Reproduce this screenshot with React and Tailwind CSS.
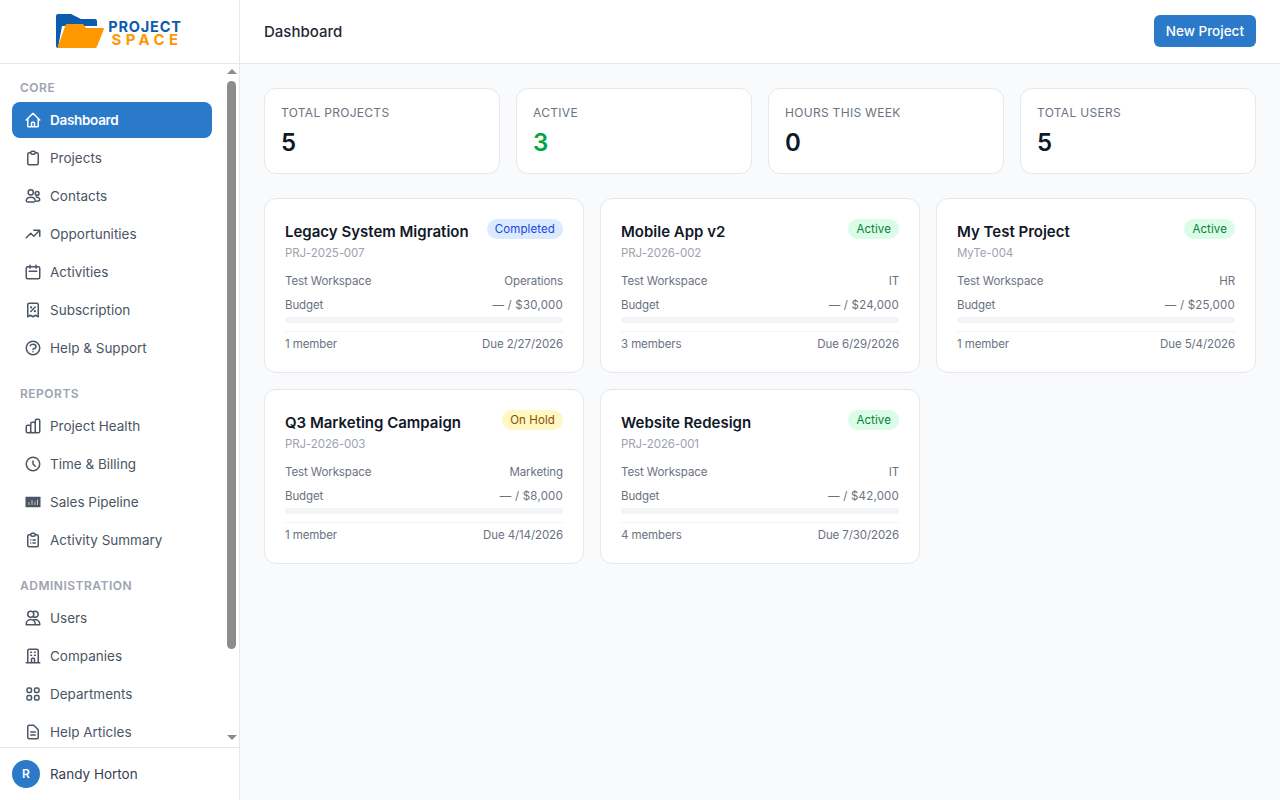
import React from 'react';
import {
  HiOutlineHome,
  HiOutlineClipboard,
  HiOutlineUsers,
  HiOutlineTrendingUp,
  HiOutlineCalendar,
  HiOutlineReceiptTax,
  HiOutlineQuestionMarkCircle,
  HiOutlineChartBar,
  HiOutlineClock,
  HiOutlineClipboardList,
  HiOutlineOfficeBuilding,
  HiOutlineViewGrid,
  HiOutlineDocumentText,
} from 'react-icons/hi';

const ContactsIcon = ({ className }) => (
  <svg className={className} viewBox="0 0 24 24" fill="none" stroke="currentColor" strokeWidth="2">
    <circle cx="9" cy="7" r="3.500" />
    <circle cx="17.500" cy="8.500" r="2.500" />
    <path d="M3 18.500c0-3 2.700-5 6-5s6 2 6 5c0 1-1 1.500-6 1.500s-6-.5-6-1.500Z" />
    <path d="M15.500 13.500c3-.5 5.500 1 5.500 3.500 0 1.500-1.500 2-5 2" />
  </svg>
);

const PipelineIcon = ({ className }) => (
  <svg className={className} viewBox="0 0 18 18">
    <rect x="1.500" y="3.700" width="15" height="10.500" rx="0.500" fill="#4b5563" />
    <path d="M5 12V9M8 12V7M11 12V8.500M13.500 12V6.500" stroke="#c3c8d0" strokeWidth="1" />
  </svg>
);

const sections = [
  {
    title: 'CORE',
    items: [
      { label: 'Dashboard', icon: HiOutlineHome, active: true },
      { label: 'Projects', icon: HiOutlineClipboard },
      { label: 'Contacts', icon: ContactsIcon },
      { label: 'Opportunities', icon: HiOutlineTrendingUp },
      { label: 'Activities', icon: HiOutlineCalendar },
      { label: 'Subscription', icon: HiOutlineReceiptTax },
      { label: 'Help & Support', icon: HiOutlineQuestionMarkCircle },
    ],
  },
  {
    title: 'REPORTS',
    items: [
      { label: 'Project Health', icon: HiOutlineChartBar },
      { label: 'Time & Billing', icon: HiOutlineClock },
      { label: 'Sales Pipeline', icon: PipelineIcon },
      { label: 'Activity Summary', icon: HiOutlineClipboardList },
    ],
  },
  {
    title: 'ADMINISTRATION',
    items: [
      { label: 'Users', icon: HiOutlineUsers },
      { label: 'Companies', icon: HiOutlineOfficeBuilding },
      { label: 'Departments', icon: HiOutlineViewGrid },
      { label: 'Help Articles', icon: HiOutlineDocumentText },
    ],
  },
];

const stats = [
  { label: 'TOTAL PROJECTS', value: '5', color: 'text-gray-900' },
  { label: 'ACTIVE', value: '3', color: 'text-green-600' },
  { label: 'HOURS THIS WEEK', value: '0', color: 'text-gray-900' },
  { label: 'TOTAL USERS', value: '5', color: 'text-gray-900' },
];

const badgeStyles = {
  Completed: 'bg-blue-100 text-blue-700',
  Active: 'bg-green-100 text-green-700',
  'On Hold': 'bg-yellow-100 text-yellow-800',
};

const projects = [
  { name: 'Legacy System Migration', code: 'PRJ-2025-007', status: 'Completed', dept: 'Operations', budget: '— / $30,000', members: '1 member', due: 'Due 2/27/2026' },
  { name: 'Mobile App v2', code: 'PRJ-2026-002', status: 'Active', dept: 'IT', budget: '— / $24,000', members: '3 members', due: 'Due 6/29/2026' },
  { name: 'My Test Project', code: 'MyTe-004', status: 'Active', dept: 'HR', budget: '— / $25,000', members: '1 member', due: 'Due 5/4/2026' },
  { name: 'Q3 Marketing Campaign', code: 'PRJ-2026-003', status: 'On Hold', dept: 'Marketing', budget: '— / $8,000', members: '1 member', due: 'Due 4/14/2026' },
  { name: 'Website Redesign', code: 'PRJ-2026-001', status: 'Active', dept: 'IT', budget: '— / $42,000', members: '4 members', due: 'Due 7/30/2026' },
];

const Logo = () => (
  <div className="flex items-center">
    <svg className="mb-[2px]" width="48" height="34" viewBox="0 0 48 34">
      <path d="M0 2Q0 0 2 0H15L25 5H39Q41 5 41 7V12H6L2 34H2Q0 34 0 32Z" fill="#0b5cad" />
      <path d="M9.500 11Q10 10 11 10H27L30 14H47Q48.300 14 48 15L41 32.500Q40.300 34 39 34H3Q1.500 34 2 32.500Z" fill="#ff9800" />
    </svg>
    <div className="mt-[2px] ml-[3px] flex flex-col items-center font-bold">
      <span className="text-[14.500px] leading-[13px] tracking-[0.8px] text-[#0b5cad]">PROJECT</span>
      <span className="pl-[4px] text-[15px] leading-[13px] tracking-[4.400px] text-[#ff9800]">SPACE</span>
    </div>
  </div>
);

const FakeScrollbar = () => (
  <div className="flex w-[15px] shrink-0 flex-col items-start pl-[3px]">
    <div className="mt-[5px] h-0 w-0 border-x-[5px] border-b-[5px] border-x-transparent border-b-[#8c8c8c]" />
    <div className="mt-[7px] h-[568px] w-[9px] rounded-full bg-[#8c8c8c]" />
    <div className="mt-[86px] h-0 w-0 border-x-[5px] border-t-[5px] border-x-transparent border-t-[#8c8c8c]" />
  </div>
);

const Sidebar = () => (
  <aside className="flex h-screen w-[240px] shrink-0 flex-col border-r border-[#e5e7eb] bg-white">
    <div className="flex h-[64px] shrink-0 items-center justify-center border-b border-[#e5e7eb]">
      <Logo />
    </div>
    <div className="flex min-h-0 flex-1">
      <div className="min-w-0 flex-1 overflow-hidden pt-[1px]">
        {sections.map((section) => (
          <div key={section.title} className="px-[12px] pt-[16px] pb-[3px]">
            <div className="mb-[7px] px-[8px] text-[12px] leading-[14px] font-semibold tracking-[0.5px] text-[#9ca3af]">
              {section.title}
            </div>
            {section.items.map((item) => (
              <div
                key={item.label}
                className={`mb-[2px] flex h-[36px] items-center gap-[8px] rounded-[8px] px-[12px] text-[13.500px] ${
                  item.active ? 'bg-[#2b7ac9] font-semibold tracking-[-0.3px] text-white' : 'text-[#4b5563]'
                }`}
              >
                <item.icon className="h-[18px] w-[18px] shrink-0" />
                <span>{item.label}</span>
              </div>
            ))}
          </div>
        ))}
      </div>
      <FakeScrollbar />
    </div>
    <div className="flex h-[53px] shrink-0 items-center gap-[10px] border-t border-[#e5e7eb] px-[12px]">
      <div className="flex h-[28px] w-[28px] items-center justify-center rounded-full bg-[#2b7ac9] text-[12px] font-semibold text-white">
        R
      </div>
      <span className="text-[13.500px] text-[#374151]">Randy Horton</span>
    </div>
  </aside>
);

const ProjectCard = ({ project }) => (
  <div className="rounded-[12px] border border-[#e5e7eb] bg-white p-[20px] text-[11.500px] tracking-[-0.1px]">
    <div className="flex items-start justify-between">
      <div className="text-[15px] leading-[26px] font-semibold tracking-normal text-[#111827]">{project.name}</div>
      <span className={`rounded-full px-[8px] text-[11.500px] leading-[20px] font-normal tracking-[0.1px] ${badgeStyles[project.status]}`}>
        {project.status}
      </span>
    </div>
    <div className="leading-[16px] text-[#9ca3af]">{project.code}</div>
    <div className="mt-[12px] flex justify-between leading-[16px] text-[#6b7280]">
      <span>Test Workspace</span>
      <span>{project.dept}</span>
    </div>
    <div className="mt-[8px] flex justify-between leading-[16px] text-[#6b7280]">
      <span>Budget</span>
      <span className="tracking-[0.2px]">{project.budget}</span>
    </div>
    <div className="mt-[4px] h-[6px] rounded-full bg-[#f3f4f6]" />
    <div className="mt-[8px] flex justify-between border-t border-[#f3f4f6] pt-[4px] leading-[16px] text-[#6b7280]">
      <span>{project.members}</span>
      <span>{project.due}</span>
    </div>
  </div>
);

export default function App() {
  return (
    <div className="flex h-screen overflow-hidden bg-[#f9fafb] font-['Inter',sans-serif]">
      <Sidebar />
      <main className="min-w-0 flex-1">
        <header className="flex h-[64px] items-center justify-between border-b border-[#e5e7eb] bg-white px-[24px]">
          <h1 className="pt-[1px] text-[15px] font-medium text-[#1f2937]">Dashboard</h1>
          <button className="-mt-[1px] h-[32px] rounded-[6px] bg-[#2b7ac9] px-[12px] text-[13.500px] font-medium text-white">
            New Project
          </button>
        </header>
        <div className="p-[24px]">
          <div className="grid grid-cols-4 gap-[16px]">
            {stats.map((stat) => (
              <div key={stat.label} className="h-[86px] rounded-[12px] border border-[#e5e7eb] bg-white px-[16px] pt-[16px]">
                <div className="text-[12px] leading-[16px] tracking-[0.3px] text-[#6b7280]">{stat.label}</div>
                <div className={`mt-[6px] text-[24px] leading-[32px] font-semibold ${stat.color}`}>{stat.value}</div>
              </div>
            ))}
          </div>
          <div className="mt-[24px] grid grid-cols-3 gap-[16px]">
            {projects.map((project) => (
              <ProjectCard key={project.code} project={project} />
            ))}
          </div>
        </div>
      </main>
    </div>
  );
}
